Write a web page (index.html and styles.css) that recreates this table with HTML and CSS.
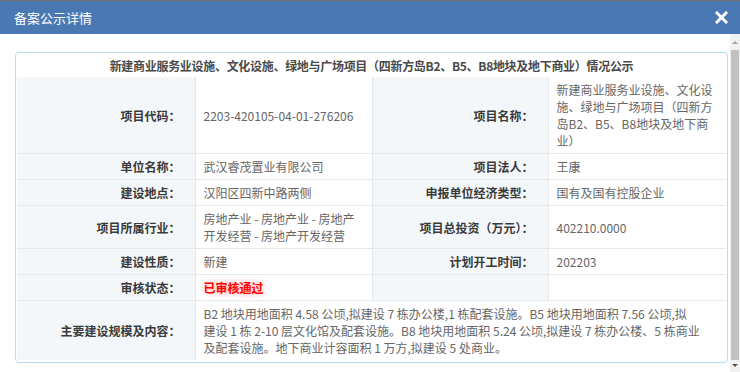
FILE: index.html
```html
<!DOCTYPE html>
<html lang="zh">
<head>
<meta charset="utf-8">
<title>备案公示详情</title>
<link rel="stylesheet" href="styles.css">
</head>
<body>
<div class="dialog">
  <div class="titlebar">
    <span class="title">备案公示详情</span>
    <svg class="close" width="13" height="13" viewBox="0 0 13 13"><path d="M2 2 L11 11 M11 2 L2 11" stroke="#fff" stroke-width="3" stroke-linecap="square"/></svg>
  </div>
  <div class="body">
    <div class="content">
      <div class="panel">
        <div class="panel-head">新建商业服务业设施、文化设施、绿地与广场项目（四新方岛B2、B5、B8地块及地下商业）情况公示</div>
        <table class="info">
          <colgroup><col class="c1"><col class="c2"><col class="c3"><col class="c4"></colgroup>
          <tr class="r1">
            <th>项目代码：</th><td>2203-420105-04-01-276206</td>
            <th>项目名称：</th><td>新建商业服务业设施、文化设施、绿地与广场项目（四新方岛B2、B5、B8地块及地下商业）</td>
          </tr>
          <tr>
            <th>单位名称：</th><td>武汉睿茂置业有限公司</td>
            <th>项目法人：</th><td>王康</td>
          </tr>
          <tr>
            <th>建设地点：</th><td>汉阳区四新中路两侧</td>
            <th>申报单位经济类型：</th><td>国有及国有控股企业</td>
          </tr>
          <tr>
            <th>项目所属行业：</th><td>房地产业 - 房地产业 - 房地产开发经营 - 房地产开发经营</td>
            <th>项目总投资（万元）：</th><td>402210.0000</td>
          </tr>
          <tr>
            <th>建设性质：</th><td>新建</td>
            <th>计划开工时间：</th><td>202203</td>
          </tr>
          <tr>
            <th>审核状态：</th><td><span class="status">已审核通过</span></td>
            <th></th><td></td>
          </tr>
          <tr>
            <th>主要建设规模及内容：</th>
            <td colspan="3">B2 地块用地面积 4.58 公顷,拟建设 7 栋办公楼,1 栋配套设施。B5 地块用地面积 7.56 公顷,拟<br>建设 1 栋 2-10 层文化馆及配套设施。B8 地块用地面积 5.24 公顷,拟建设 7 栋办公楼、5 栋商业<br>及配套设施。地下商业计容面积 1 万方,拟建设 5 处商业。</td>
          </tr>
        </table>
      </div>
    </div>
    <div class="scrollbar">
      <div class="arrow up"></div>
      <div class="thumb"></div>
      <div class="arrow down"></div>
    </div>
  </div>
</div>
</body>
</html>
```
FILE: styles.css
```css
html, body {
  margin: 0;
  padding: 0;
  background: #fff;
  font-family: "Noto Sans CJK SC", "Microsoft YaHei", sans-serif;
  font-size: 12px;
}
.dialog {
  width: 740px;
  height: 372px;
  display: flex;
  flex-direction: column;
  overflow: hidden;
}
.titlebar {
  height: 34px;
  flex: none;
  box-sizing: border-box;
  border-top: 1px solid #6b6f74;
  background: #4a78b3;
  display: flex;
  align-items: center;
  justify-content: space-between;
  padding: 0 12px 0 14px;
}
.title {
  color: #fff;
  font-size: 13px;
}
.close { display: block; }
.body {
  flex: 1;
  display: flex;
  min-height: 0;
}
.content {
  flex: 1;
  padding: 18px 2px 0 15px;
}
.panel {
  border: 1px solid #b3dcf5;
  border-radius: 4px;
  padding: 0 1px 2px 1px;
}
.panel-head {
  height: 24px;
  line-height: 26px;
  text-align: center;
  font-weight: bold;
  color: #4a4a4a;
  font-size: 12px;
  letter-spacing: -0.3px;
}
.info {
  width: 100%;
  border-collapse: collapse;
  table-layout: fixed;
}
.info th, .info td {
  border: 1px solid #e6e9eb;
  padding: 4px 8px;
  line-height: 17px;
  vertical-align: middle;
}
.info th {
  background: #f4f7f9;
  text-align: right;
  font-weight: bold;
  color: #3a3a3a;
  padding-right: 14px;
}
.info td {
  color: #666;
  text-align: left;
  background: #fff;
}
.info tr:first-child th, .info tr:first-child td { border-top: 0; }
.info tr th:first-child { border-left: 0; }
.info tr td:last-child { border-right: 0; }
.info tr:last-child th, .info tr:last-child td { border-bottom: 0; }
.c1 { width: 178px; }
.c2 { width: 177px; }
.c3 { width: 176px; }
.c4 { width: auto; }
.status {
  color: #f00;
  font-weight: bold;
  text-shadow: 0 0 6px rgba(255, 0, 0, 0.4);
}
.scrollbar {
  width: 10px;
  flex: none;
  background: #f1f1f1;
  display: flex;
  flex-direction: column;
  align-items: center;
  padding: 4px 0 2px;
  box-sizing: border-box;
}
.arrow {
  width: 0;
  height: 0;
  border-left: 3px solid transparent;
  border-right: 3px solid transparent;
  flex: none;
}
.arrow.up {
  border-bottom: 3px solid #a3a3a3;
  margin: 3px 0 6px;
}
.arrow.down {
  border-top: 3px solid #505050;
  margin: 4px 0 3px;
}
.thumb {
  flex: 1;
  width: 8px;
  background: #c1c1c1;
}
```
